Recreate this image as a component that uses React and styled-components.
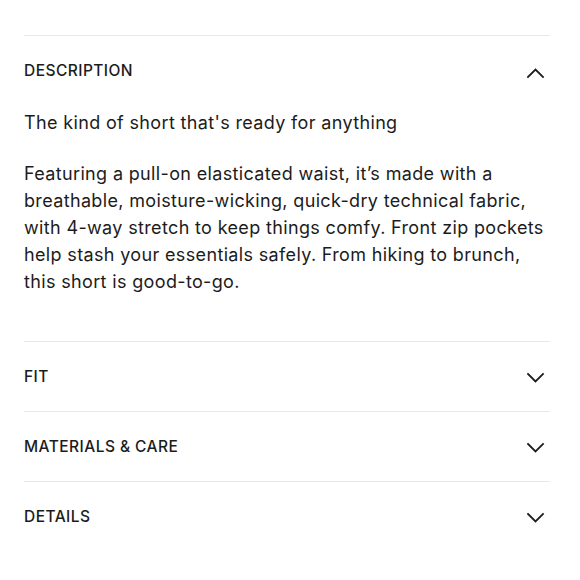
import React from "react";
import styled, { createGlobalStyle } from "styled-components";

const Global = createGlobalStyle`
  * { box-sizing: border-box; }
  body {
    margin: 0;
    background: #ffffff;
    font-family: Inter, "Noto Sans", Arial, sans-serif;
    color: #1c1c1c;
  }
`;

const Page = styled.div`
  padding: 35px 30px 0 24px;
`;

const Section = styled.section`
  border-top: 1px solid #e8e8e8;
`;

const Header = styled.button`
  display: flex;
  width: 100%;
  height: 69px;
  align-items: center;
  justify-content: space-between;
  padding: 0;
  border: 0;
  background: none;
  cursor: pointer;
  font-family: inherit;
  color: inherit;
`;

const Title = styled.span`
  font-size: 15.5px;
  font-weight: 500;
  letter-spacing: 0.45px;
  text-transform: uppercase;
`;

const Chevron = styled.svg`
  width: 32px;
  height: 32px;
  margin-top: ${(p) => (p.$up ? "4px" : "2px")};
  flex: none;
`;

const Body = styled.div`
  padding: 4px 0 46px;
`;

const Para = styled.p`
  margin: 0 0 24px;
  font-size: 18px;
  line-height: 27px;
  letter-spacing: 0.35px;
  &:last-child { margin-bottom: 0; }
`;

const Icon = ({ up }) => (
  <Chevron $up={up} viewBox="0 0 32 32" fill="none" stroke="#1c1c1c" strokeWidth="1.8" strokeLinecap="square" strokeLinejoin="miter">
    {up ? <path d="M10 20 L17.5 12.5 L25 20" /> : <path d="M10 12 L17.5 19.5 L25 12" />}
  </Chevron>
);

const Item = ({ title, open, children }) => (
  <Section>
    <Header type="button" aria-expanded={open}>
      <Title>{title}</Title>
      <Icon up={open} />
    </Header>
    {open && <Body>{children}</Body>}
  </Section>
);

export default function App() {
  return (
    <>
      <Global />
      <Page>
        <Item title="Description" open>
          <Para>The kind of short that's ready for anything</Para>
          <Para>
            Featuring a pull-on elasticated waist, it’s made with a breathable, moisture-wicking, quick-dry
            technical fabric, with 4-way stretch to keep things comfy. Front zip pockets help stash your
            essentials safely. From hiking to brunch, this short is good-to-go.
          </Para>
        </Item>
        <Item title="Fit" />
        <Item title="Materials &amp; Care" />
        <Item title="Details" />
      </Page>
    </>
  );
}
